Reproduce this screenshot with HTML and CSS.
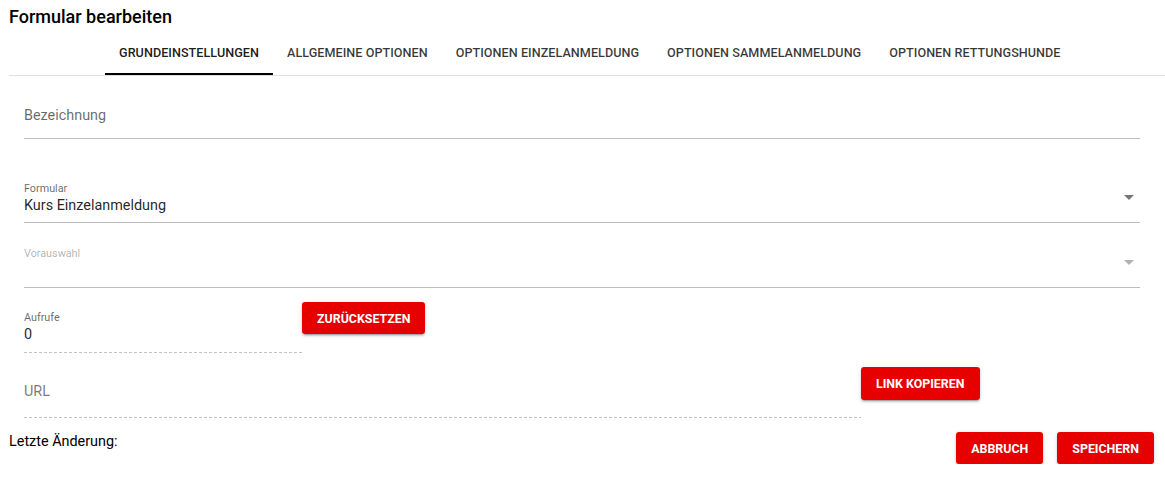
FILE: index.html
```html
<!DOCTYPE html>
<html lang="de">
<head>
<meta charset="utf-8">
<title>Formular bearbeiten</title>
<link rel="stylesheet" href="styles.css">
</head>
<body>
<div class="page">
  <h1 class="title">Formular bearbeiten</h1>
  <nav class="tabs">
    <div class="tab active">Grundeinstellungen</div>
    <div class="tab">Allgemeine Optionen</div>
    <div class="tab">Optionen Einzelanmeldung</div>
    <div class="tab">Optionen Sammelanmeldung</div>
    <div class="tab">Optionen Rettungshunde</div>
  </nav>
  <form class="form">
    <div class="field field-name">
      <span class="placeholder">Bezeichnung</span>
    </div>
    <div class="field field-select field-formular">
      <div class="field-body">
        <span class="small-label">Formular</span>
        <span class="value">Kurs Einzelanmeldung</span>
      </div>
      <svg class="caret" width="10" height="5" viewBox="0 0 10 5"><path d="M0 0h10L5 5z"/></svg>
    </div>
    <div class="field field-select field-vorauswahl disabled">
      <div class="field-body">
        <span class="small-label">Vorauswahl</span>
        <span class="value">&nbsp;</span>
      </div>
      <svg class="caret" width="10" height="5" viewBox="0 0 10 5"><path d="M0 0h10L5 5z"/></svg>
    </div>
    <div class="row">
      <div class="field dashed field-aufrufe">
        <div class="field-body">
          <span class="small-label">Aufrufe</span>
          <span class="value">0</span>
        </div>
      </div>
      <button type="button" class="btn btn-row">Zurücksetzen</button>
    </div>
    <div class="row">
      <div class="field dashed field-url">
        <span class="placeholder">URL</span>
      </div>
      <button type="button" class="btn btn-row btn-link">Link kopieren</button>
    </div>
  </form>
  <footer class="footer">
    <span class="changed">Letzte Änderung:</span>
    <div class="actions">
      <button type="button" class="btn">Abbruch</button>
      <button type="button" class="btn">Speichern</button>
    </div>
  </footer>
</div>
</body>
</html>
```

FILE: styles.css
```css
* { box-sizing: border-box; }

html, body {
  margin: 0;
  background: #ffffff;
  font-family: Roboto, "Liberation Sans", Arial, sans-serif;
  color: rgba(0, 0, 0, 0.87);
}

.page {
  padding-left: 9px;
}

.title {
  margin: 0;
  padding-top: 6px;
  font-size: 18px;
  line-height: 21px;
  font-weight: 500;
  color: #000;
}

.tabs {
  display: flex;
  margin-top: 5px;
  padding-left: 96px;
  border-bottom: 1px solid #e0e0e0;
}

.tab {
  height: 43px;
  padding: 0 14px;
  display: flex;
  align-items: center;
  font-size: 12.6px;
  font-weight: 500;
  letter-spacing: 0.05px;
  text-transform: uppercase;
  color: rgba(0, 0, 0, 0.78);
  border-bottom: 2px solid transparent;
}

.tab.active {
  color: rgba(0, 0, 0, 0.9);
  border-bottom-color: #000;
}

.form {
  padding: 0 25px 0 15px;
}

.field {
  display: flex;
  align-items: flex-end;
  border-bottom: 1px solid #bdbdbd;
  font-size: 14.4px;
}

.field.dashed {
  border-bottom: none;
  background-image: repeating-linear-gradient(to right, #c2c2c2 0 3px, transparent 3px 5px);
  background-size: 100% 1px;
  background-position: left bottom;
  background-repeat: no-repeat;
}

.placeholder {
  line-height: 20px;
  color: rgba(0, 0, 0, 0.6);
}

.field-name {
  height: 63px;
  padding-bottom: 12px;
}

.field-body {
  flex: 1;
  display: flex;
  flex-direction: column;
  padding-bottom: 7px;
}

.small-label {
  font-size: 10.8px;
  line-height: 12px;
  margin-bottom: 2px;
  color: rgba(0, 0, 0, 0.6);
}

.value {
  font-size: 14.4px;
  line-height: 18px;
  color: rgba(0, 0, 0, 0.87);
}

.caret {
  fill: rgba(0, 0, 0, 0.54);
  margin: 0 6px 22px 0;
}

.field-formular {
  height: 84px;
}

.field-vorauswahl {
  height: 65px;
}

.disabled .small-label {
  color: rgba(0, 0, 0, 0.32);
}

.disabled .caret {
  fill: rgba(0, 0, 0, 0.3);
}

.row {
  display: flex;
  align-items: flex-start;
}

.field-aufrufe {
  width: 278px;
  height: 65px;
  padding-bottom: 1px;
}

.field-aufrufe .field-body {
  padding-bottom: 8px;
}

.field-url {
  width: 837px;
  height: 65px;
  padding-bottom: 16px;
}

.field-url .placeholder {
  color: rgba(0, 0, 0, 0.55);
}

.btn {
  height: 32px;
  padding: 0 15px;
  border: none;
  border-radius: 3px;
  background: #e60000;
  color: #fff;
  font-family: Roboto, "Liberation Sans", Arial, sans-serif;
  font-size: 12.4px;
  font-weight: 700;
  text-transform: uppercase;
  box-shadow: 0 3px 1px -2px rgba(0,0,0,.2), 0 2px 2px 0 rgba(0,0,0,.14), 0 1px 5px 0 rgba(0,0,0,.12);
  cursor: pointer;
}

.btn-row {
  margin-top: 14px;
}

.btn-link {
  height: 33px;
}

.footer {
  display: flex;
  justify-content: space-between;
  align-items: flex-start;
  padding-right: 11px;
}

.changed {
  margin-top: 16px;
  font-size: 14.4px;
  line-height: 16px;
  color: #000;
}

.actions {
  display: flex;
  gap: 14px;
  margin-top: 14px;
}
```
